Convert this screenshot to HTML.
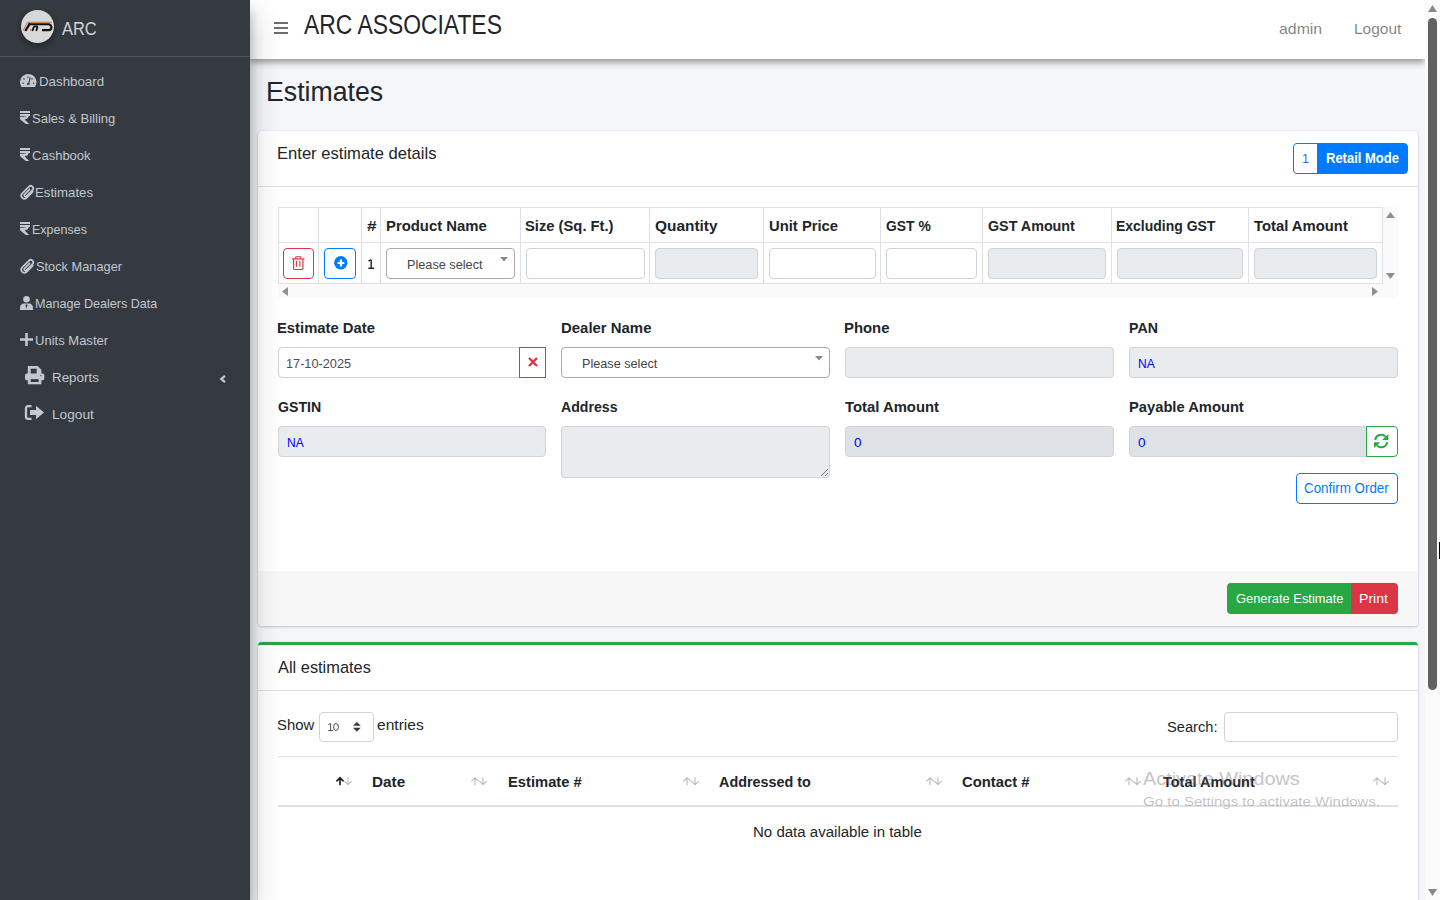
<!DOCTYPE html>
<html><head><meta charset="utf-8"><title>Estimates</title><style>*{box-sizing:border-box;margin:0;padding:0}
html,body{width:1440px;height:900px;overflow:hidden;background:#f4f6f9;font-family:"Liberation Sans",sans-serif;}
.a{position:absolute}
.t{position:absolute;white-space:nowrap}
svg{position:absolute;overflow:visible}
</style></head><body>
<div class="t" style="left:265.51px;top:78.17px;font-size:27.91px;line-height:27.91px;color:#212529;transform:scaleX(0.9564);transform-origin:0 0;">Estimates</div>
<div class="a" style="left:258px;top:131px;width:1160px;height:495px;background:#fff;border-radius:4px;box-shadow:0 0 1px rgba(0,0,0,.125),0 1px 3px rgba(0,0,0,.2)"></div>
<div class="a" style="left:258px;top:186px;width:1160px;height:1px;background:rgba(0,0,0,.125)"></div>
<div class="t" style="left:277.34px;top:144.60px;font-size:17.01px;line-height:17.01px;color:#212529;transform:scaleX(0.9757);transform-origin:0 0;">Enter estimate details</div>
<div class="a" style="left:1293px;top:143px;width:115px;height:31px;border:1px solid #007bff;border-radius:4px;background:#007bff"></div>
<div class="a" style="left:1294px;top:144px;width:23px;height:29px;background:#fff;border-radius:3px 0 0 3px"></div>
<svg style="left:1303.1px;top:154px" width="5.58" height="9" viewBox="0 0 5.58 9"><path d="M2.90 0.55V8.45M0.28 8.45H5.47M2.90 0.55L0.45 1.80" fill="none" stroke="#007bff" stroke-width="1.1"/></svg>
<div class="t" style="left:1325.83px;top:151.69px;font-size:13.95px;line-height:13.95px;color:#fff;font-weight:bold;transform:scaleX(0.9325);transform-origin:0 0;">Retail Mode</div>
<div class="a" style="left:278px;top:207px;width:1120px;height:91px;background:#fafafa"></div>
<div class="a" style="left:278px;top:207px;width:1105px;height:77px;background:#fff"></div>
<div class="a" style="left:278px;top:207px;width:1105px;height:1px;background:#dee2e6"></div>
<div class="a" style="left:278px;top:242px;width:1105px;height:1px;background:#dee2e6"></div>
<div class="a" style="left:278px;top:283px;width:1105px;height:1px;background:#dee2e6"></div>
<div class="a" style="left:278px;top:207px;width:1px;height:77px;background:#dee2e6"></div>
<div class="a" style="left:318px;top:207px;width:1px;height:77px;background:#dee2e6"></div>
<div class="a" style="left:361px;top:207px;width:1px;height:77px;background:#dee2e6"></div>
<div class="a" style="left:380px;top:207px;width:1px;height:77px;background:#dee2e6"></div>
<div class="a" style="left:520px;top:207px;width:1px;height:77px;background:#dee2e6"></div>
<div class="a" style="left:649px;top:207px;width:1px;height:77px;background:#dee2e6"></div>
<div class="a" style="left:763px;top:207px;width:1px;height:77px;background:#dee2e6"></div>
<div class="a" style="left:880px;top:207px;width:1px;height:77px;background:#dee2e6"></div>
<div class="a" style="left:982px;top:207px;width:1px;height:77px;background:#dee2e6"></div>
<div class="a" style="left:1111px;top:207px;width:1px;height:77px;background:#dee2e6"></div>
<div class="a" style="left:1248px;top:207px;width:1px;height:77px;background:#dee2e6"></div>
<div class="a" style="left:1382px;top:207px;width:1px;height:77px;background:#dee2e6"></div>
<div class="t" style="left:366.71px;top:218.10px;font-size:15.12px;line-height:15.12px;color:#212529;font-weight:bold;transform:scaleX(1.1386);transform-origin:0 0;">#</div>
<div class="t" style="left:385.51px;top:218.10px;font-size:15.12px;line-height:15.12px;color:#212529;font-weight:bold;transform:scaleX(0.9839);transform-origin:0 0;">Product Name</div>
<div class="t" style="left:525.17px;top:218.10px;font-size:15.12px;line-height:15.12px;color:#212529;font-weight:bold;transform:scaleX(0.9764);transform-origin:0 0;">Size (Sq. Ft.)</div>
<div class="t" style="left:655.17px;top:218.10px;font-size:15.12px;line-height:15.12px;color:#212529;font-weight:bold;transform:scaleX(1.0199);transform-origin:0 0;">Quantity</div>
<div class="t" style="left:768.61px;top:218.10px;font-size:15.12px;line-height:15.12px;color:#212529;font-weight:bold;transform:scaleX(0.9794);transform-origin:0 0;">Unit Price</div>
<div class="t" style="left:885.93px;top:218.10px;font-size:15.12px;line-height:15.12px;color:#212529;font-weight:bold;transform:scaleX(0.9185);transform-origin:0 0;">GST %</div>
<div class="t" style="left:987.71px;top:218.10px;font-size:15.12px;line-height:15.12px;color:#212529;font-weight:bold;transform:scaleX(0.9464);transform-origin:0 0;">GST Amount</div>
<div class="t" style="left:1116.47px;top:218.10px;font-size:15.12px;line-height:15.12px;color:#212529;font-weight:bold;transform:scaleX(0.9245);transform-origin:0 0;">Excluding GST</div>
<div class="t" style="left:1253.83px;top:218.10px;font-size:15.12px;line-height:15.12px;color:#212529;font-weight:bold;transform:scaleX(0.9806);transform-origin:0 0;">Total Amount</div>
<div class="a" style="left:283px;top:248px;width:31px;height:31px;border:1px solid #dc3545;border-radius:4px"></div>
<div class="a" style="left:324px;top:248px;width:32px;height:31px;border:1px solid #007bff;border-radius:4px"></div>
<svg style="left:367.8px;top:258.8px" width="6.20" height="10" viewBox="0 0 6.20 10"><path d="M3.22 0.70V9.30M0.31 9.30H6.08M3.22 0.70L0.50 2.00" fill="none" stroke="#212529" stroke-width="1.4"/></svg>
<svg style="left:292px;top:256px" width="13" height="14" viewBox="0 0 13 14"><path d="M0 2.95h12.6" stroke="#dc3545" stroke-width="1.3"/><path d="M3.4 2.6L4.1 .75h4.4l.7 1.85" fill="none" stroke="#dc3545" stroke-width="1.2"/><path d="M1.6 3.4V12.4a1.1 1.1 0 0 0 1.1 1.1h7.1a1.1 1.1 0 0 0 1.1-1.1V3.4" fill="none" stroke="#dc3545" stroke-width="1.2"/><path d="M4.6 4.8v6M7.9 4.8v6" stroke="#dc3545" stroke-width="1.1"/></svg>
<svg style="left:333.8px;top:255.9px" width="14" height="14" viewBox="0 0 14 14"><circle cx="6.8" cy="6.8" r="6.7" fill="#007bff"/><path d="M7 3.6v6.8M3.6 7h6.8" stroke="#fff" stroke-width="2.2"/></svg>
<div class="a" style="left:386px;top:248px;width:129px;height:31px;border:1px solid #aaa;border-radius:4px;background:#fff"></div>
<div class="t" style="left:406.56px;top:258.05px;font-size:13.52px;line-height:13.52px;color:#444;transform:scaleX(0.9396);transform-origin:0 0;">Please select</div>
<svg style="left:500px;top:257px" width="8" height="4.5" viewBox="0 0 8 4.5"><path d="M0 0h8L4 4.5z" fill="#888"/></svg>
<div class="a" style="left:526px;top:248px;width:118.5px;height:31px;border:1px solid #ced4da;border-radius:4px;background:#fff"></div>
<div class="a" style="left:655px;top:248px;width:102.5px;height:31px;border:1px solid #ced4da;border-radius:4px;background:#e9ecef"></div>
<div class="a" style="left:769px;top:248px;width:107px;height:31px;border:1px solid #ced4da;border-radius:4px;background:#fff"></div>
<div class="a" style="left:886px;top:248px;width:90.5px;height:31px;border:1px solid #ced4da;border-radius:4px;background:#fff"></div>
<div class="a" style="left:988px;top:248px;width:118px;height:31px;border:1px solid #ced4da;border-radius:4px;background:#e9ecef"></div>
<div class="a" style="left:1117px;top:248px;width:126px;height:31px;border:1px solid #ced4da;border-radius:4px;background:#e9ecef"></div>
<div class="a" style="left:1254px;top:248px;width:123px;height:31px;border:1px solid #ced4da;border-radius:4px;background:#e9ecef"></div>
<svg style="left:1386px;top:212px" width="9" height="6" viewBox="0 0 9 6"><path d="M0 6h9L4.5 0z" fill="#8f8f8f"/></svg>
<svg style="left:1386px;top:273px" width="9" height="6" viewBox="0 0 9 6"><path d="M0 0h9L4.5 6z" fill="#8f8f8f"/></svg>
<svg style="left:282px;top:287px" width="6" height="9" viewBox="0 0 6 9"><path d="M6 0v9L0 4.5z" fill="#8f8f8f"/></svg>
<svg style="left:1372px;top:287px" width="6" height="9" viewBox="0 0 6 9"><path d="M0 0v9L6 4.5z" fill="#8f8f8f"/></svg>
<div class="t" style="left:277.31px;top:320.69px;font-size:14.53px;line-height:14.53px;color:#212529;font-weight:bold;transform:scaleX(1.0198);transform-origin:0 0;">Estimate Date</div>
<div class="t" style="left:560.90px;top:320.69px;font-size:14.53px;line-height:14.53px;color:#212529;font-weight:bold;transform:scaleX(1.0282);transform-origin:0 0;">Dealer Name</div>
<div class="t" style="left:844.00px;top:320.69px;font-size:14.53px;line-height:14.53px;color:#212529;font-weight:bold;transform:scaleX(1.0251);transform-origin:0 0;">Phone</div>
<div class="t" style="left:1128.65px;top:320.69px;font-size:14.53px;line-height:14.53px;color:#212529;font-weight:bold;transform:scaleX(0.9762);transform-origin:0 0;">PAN</div>
<div class="t" style="left:277.72px;top:399.69px;font-size:14.53px;line-height:14.53px;color:#212529;font-weight:bold;transform:scaleX(0.9740);transform-origin:0 0;">GSTIN</div>
<div class="t" style="left:561.15px;top:399.69px;font-size:14.53px;line-height:14.53px;color:#212529;font-weight:bold;transform:scaleX(0.9723);transform-origin:0 0;">Address</div>
<div class="t" style="left:844.83px;top:399.69px;font-size:14.53px;line-height:14.53px;color:#212529;font-weight:bold;transform:scaleX(1.0223);transform-origin:0 0;">Total Amount</div>
<div class="t" style="left:1128.61px;top:399.69px;font-size:14.53px;line-height:14.53px;color:#212529;font-weight:bold;transform:scaleX(1.0140);transform-origin:0 0;">Payable Amount</div>
<div class="a" style="left:278px;top:347px;width:242px;height:31px;border:1px solid #ced4da;border-radius:4px 0 0 4px;background:#fff"></div>
<div class="a" style="left:519px;top:347px;width:27px;height:31px;border:1px solid #dc3545;background:#fff"></div>
<div class="t" style="left:285.93px;top:356.82px;font-size:13.08px;line-height:13.08px;color:#495057;transform:scaleX(0.9721);transform-origin:0 0;">17-10-2025</div>
<svg style="left:527.5px;top:357px" width="10" height="10" viewBox="0 0 10 10"><path d="M1 1l8 8M9 1l-8 8" stroke="#dc3545" stroke-width="2.4"/></svg>
<div class="a" style="left:561px;top:347px;width:269px;height:31px;border:1px solid #aaa;border-radius:4px;background:#fff"></div>
<div class="t" style="left:581.96px;top:357.25px;font-size:13.52px;line-height:13.52px;color:#444;transform:scaleX(0.9371);transform-origin:0 0;">Please select</div>
<svg style="left:815px;top:356px" width="8" height="4.5" viewBox="0 0 8 4.5"><path d="M0 0h8L4 4.5z" fill="#888"/></svg>
<div class="a" style="left:845px;top:347px;width:269px;height:31px;border:1px solid #ced4da;border-radius:4px;background:#e9ecef"></div>
<div class="a" style="left:1129px;top:347px;width:269px;height:31px;border:1px solid #ced4da;border-radius:4px;background:#e9ecef"></div>
<div class="t" style="left:1137.71px;top:356.92px;font-size:13.08px;line-height:13.08px;color:#0000ff;transform:scaleX(0.9204);transform-origin:0 0;">NA</div>
<div class="a" style="left:278px;top:426px;width:268px;height:31px;border:1px solid #ced4da;border-radius:4px;background:#e9ecef"></div>
<div class="t" style="left:286.51px;top:435.92px;font-size:13.08px;line-height:13.08px;color:#0000ff;transform:scaleX(0.9204);transform-origin:0 0;">NA</div>
<div class="a" style="left:561px;top:426px;width:269px;height:52px;border:1px solid #ced4da;border-radius:4px;background:#e9ecef"></div>
<svg style="left:820px;top:468px" width="8" height="8" viewBox="0 0 8 8"><path d="M8 1L1 8M8 5L5 8" stroke="#777" stroke-width="1"/></svg>
<div class="a" style="left:845px;top:426px;width:269px;height:31px;border:1px solid #ced4da;border-radius:4px;background:#dee1e5"></div>
<div class="t" style="left:853.97px;top:435.92px;font-size:13.08px;line-height:13.08px;color:#0000ff;transform:scaleX(1.0385);transform-origin:0 0;">0</div>
<div class="a" style="left:1129px;top:426px;width:238px;height:31px;border:1px solid #ced4da;border-radius:4px 0 0 4px;background:#dee1e5"></div>
<div class="t" style="left:1137.97px;top:435.92px;font-size:13.08px;line-height:13.08px;color:#0000ff;transform:scaleX(1.0385);transform-origin:0 0;">0</div>
<div class="a" style="left:1366px;top:426px;width:32px;height:31px;border:1px solid #28a745;border-radius:0 4px 4px 0;background:#fff"></div>
<svg style="left:1374.2px;top:433.6px" width="15" height="15" viewBox="0 0 15 15"><path d="M1.1 5.9A6.2 6.2 0 0 1 11.6 2.6" fill="none" stroke="#28a745" stroke-width="2"/><path d="M8.1 6H14.4V0.1z" fill="#28a745"/><path d="M13.3 8.1A6.2 6.2 0 0 1 2.8 11.4" fill="none" stroke="#28a745" stroke-width="2"/><path d="M6.3 8.2H0V14z" fill="#28a745"/></svg>
<div class="a" style="left:1296px;top:473px;width:102px;height:31px;border:1px solid #007bff;border-radius:4px;background:#fff"></div>
<div class="t" style="left:1304.32px;top:482.11px;font-size:13.81px;line-height:13.81px;color:#007bff;transform:scaleX(0.9692);transform-origin:0 0;">Confirm Order</div>
<div class="a" style="left:258px;top:571px;width:1160px;height:55px;background:#f7f7f7;border-radius:0 0 4px 4px"></div>
<div class="a" style="left:1227px;top:583px;width:124px;height:31px;background:#28a745;border-radius:4px 0 0 4px"></div>
<div class="a" style="left:1351px;top:583px;width:47px;height:31px;background:#dc3545;border-radius:0 4px 4px 0"></div>
<div class="t" style="left:1235.85px;top:591.80px;font-size:13.23px;line-height:13.23px;color:#fff;transform:scaleX(0.9747);transform-origin:0 0;">Generate Estimate</div>
<div class="t" style="left:1359.34px;top:591.80px;font-size:13.23px;line-height:13.23px;color:#fff;transform:scaleX(1.0652);transform-origin:0 0;">Print</div>
<div class="a" style="left:258px;top:642px;width:1160px;height:300px;background:#fff;border-radius:4px;border-top:3px solid #28a745;box-shadow:0 0 1px rgba(0,0,0,.125),0 1px 3px rgba(0,0,0,.2)"></div>
<div class="a" style="left:258px;top:690px;width:1160px;height:1px;background:rgba(0,0,0,.125)"></div>
<div class="t" style="left:277.67px;top:658.78px;font-size:17.15px;line-height:17.15px;color:#212529;transform:scaleX(0.9560);transform-origin:0 0;">All estimates</div>
<div class="t" style="left:277.12px;top:716.88px;font-size:15.26px;line-height:15.26px;color:#212529;transform:scaleX(0.9760);transform-origin:0 0;">Show</div>
<div class="a" style="left:318.5px;top:711.5px;width:55px;height:30px;border:1px solid #ced4da;border-radius:4px;background:#fff"></div>
<svg style="left:327.8px;top:723px" width="4.96" height="8" viewBox="0 0 4.96 8"><path d="M2.58 0.50V7.50M0.25 7.50H4.86M2.58 0.50L0.40 1.60" fill="none" stroke="#495057" stroke-width="1.0"/></svg>
<svg style="left:333px;top:723px" width="6" height="8" viewBox="0 0 6 8"><ellipse cx="3" cy="4" rx="2.4" ry="3.5" fill="none" stroke="#495057" stroke-width="1"/></svg>
<svg style="left:353px;top:722.2px" width="7.8" height="9.7" viewBox="0 0 7.8 9.7"><path d="M0 3.8h7.8L3.9 0zM0 5.8h7.8L3.9 9.7z" fill="#343a40"/></svg>
<div class="t" style="left:377.14px;top:716.88px;font-size:15.26px;line-height:15.26px;color:#212529;transform:scaleX(1.0206);transform-origin:0 0;">entries</div>
<div class="t" style="left:1166.53px;top:718.98px;font-size:15.26px;line-height:15.26px;color:#212529;transform:scaleX(0.9628);transform-origin:0 0;">Search:</div>
<div class="a" style="left:1224px;top:711.5px;width:174px;height:30px;border:1px solid #ced4da;border-radius:4px;background:#fff"></div>
<div class="a" style="left:278px;top:756px;width:1120px;height:1px;background:#dee2e6"></div>
<div class="a" style="left:278px;top:805px;width:1120px;height:2px;background:#dee2e6"></div>
<div class="t" style="left:371.78px;top:774.65px;font-size:14.83px;line-height:14.83px;color:#212529;font-weight:bold;transform:scaleX(1.0323);transform-origin:0 0;">Date</div>
<div class="t" style="left:508.01px;top:774.65px;font-size:14.83px;line-height:14.83px;color:#212529;font-weight:bold;transform:scaleX(0.9939);transform-origin:0 0;">Estimate #</div>
<div class="t" style="left:719.24px;top:774.65px;font-size:14.83px;line-height:14.83px;color:#212529;font-weight:bold;transform:scaleX(0.9691);transform-origin:0 0;">Addressed to</div>
<div class="t" style="left:962.39px;top:774.65px;font-size:14.83px;line-height:14.83px;color:#212529;font-weight:bold;transform:scaleX(0.9994);transform-origin:0 0;">Contact #</div>
<div class="t" style="left:1163.24px;top:774.65px;font-size:14.83px;line-height:14.83px;color:#212529;font-weight:bold;transform:scaleX(0.9770);transform-origin:0 0;">Total Amount</div>
<svg style="left:335.5px;top:776.9px" width="16.5" height="8.5" viewBox="0 0 16.5 8.5"><path d="M4 8.3V0.8M0.4 4.4L4 0.8l3.6 3.6" fill="none" stroke="#212529" stroke-width="1.7"/><path d="M12 0.2V7.7M8.4 4.1L12 7.7l3.6-3.6" fill="none" stroke="#b9bdc1" stroke-width="1.15"/></svg>
<svg style="left:470.8px;top:776.9px" width="16.5" height="8.5" viewBox="0 0 16.5 8.5"><path d="M4 8.3V0.8M0.4 4.4L4 0.8l3.6 3.6" fill="none" stroke="#b9bdc1" stroke-width="1.15"/><path d="M12 0.2V7.7M8.4 4.1L12 7.7l3.6-3.6" fill="none" stroke="#b9bdc1" stroke-width="1.15"/></svg>
<svg style="left:682.5px;top:776.9px" width="16.5" height="8.5" viewBox="0 0 16.5 8.5"><path d="M4 8.3V0.8M0.4 4.4L4 0.8l3.6 3.6" fill="none" stroke="#b9bdc1" stroke-width="1.15"/><path d="M12 0.2V7.7M8.4 4.1L12 7.7l3.6-3.6" fill="none" stroke="#b9bdc1" stroke-width="1.15"/></svg>
<svg style="left:925.8px;top:776.9px" width="16.5" height="8.5" viewBox="0 0 16.5 8.5"><path d="M4 8.3V0.8M0.4 4.4L4 0.8l3.6 3.6" fill="none" stroke="#b9bdc1" stroke-width="1.15"/><path d="M12 0.2V7.7M8.4 4.1L12 7.7l3.6-3.6" fill="none" stroke="#b9bdc1" stroke-width="1.15"/></svg>
<svg style="left:1124.6px;top:776.9px" width="16.5" height="8.5" viewBox="0 0 16.5 8.5"><path d="M4 8.3V0.8M0.4 4.4L4 0.8l3.6 3.6" fill="none" stroke="#b9bdc1" stroke-width="1.15"/><path d="M12 0.2V7.7M8.4 4.1L12 7.7l3.6-3.6" fill="none" stroke="#b9bdc1" stroke-width="1.15"/></svg>
<svg style="left:1372.8px;top:776.9px" width="16.5" height="8.5" viewBox="0 0 16.5 8.5"><path d="M4 8.3V0.8M0.4 4.4L4 0.8l3.6 3.6" fill="none" stroke="#b9bdc1" stroke-width="1.15"/><path d="M12 0.2V7.7M8.4 4.1L12 7.7l3.6-3.6" fill="none" stroke="#b9bdc1" stroke-width="1.15"/></svg>
<div class="t" style="left:752.97px;top:825.09px;font-size:14.53px;line-height:14.53px;color:#212529;transform:scaleX(1.0353);transform-origin:0 0;">No data available in table</div>
<div class="t" style="left:1143.46px;top:769.13px;font-size:19.04px;line-height:19.04px;color:rgba(120,120,120,.45);transform:scaleX(1.0440);transform-origin:0 0;">Activate Windows</div>
<div class="t" style="left:1142.74px;top:794.68px;font-size:13.66px;line-height:13.66px;color:rgba(120,120,120,.45);transform:scaleX(1.1000);transform-origin:0 0;">Go to Settings to activate Windows.</div>
<div class="a" style="left:250px;top:0;width:1175px;height:59px;background:#fff;box-shadow:0 3px 7px rgba(0,0,0,.42)"></div>
<div class="a" style="left:274px;top:22px;width:14px;height:2px;background:#6e6e6e"></div>
<div class="a" style="left:274px;top:27px;width:14px;height:2px;background:#6e6e6e"></div>
<div class="a" style="left:274px;top:32px;width:14px;height:2px;background:#6e6e6e"></div>
<div class="t" style="left:304.16px;top:10.99px;font-size:27.18px;line-height:27.18px;color:#212529;transform:scaleX(0.8419);transform-origin:0 0;">ARC ASSOCIATES</div>
<div class="t" style="left:1279.13px;top:22.02px;font-size:14.97px;line-height:14.97px;color:rgba(0,0,0,.5);transform:scaleX(1.0594);transform-origin:0 0;">admin</div>
<div class="t" style="left:1353.73px;top:22.02px;font-size:14.97px;line-height:14.97px;color:rgba(0,0,0,.5);transform:scaleX(1.0324);transform-origin:0 0;">Logout</div>
<div class="a" style="left:0;top:0;width:250px;height:900px;background:#343a40;box-shadow:0 14px 28px rgba(0,0,0,.25),0 10px 10px rgba(0,0,0,.22)"></div>
<div class="a" style="left:0px;top:56px;width:250px;height:1px;background:#4b545c"></div>
<div class="a" style="left:21px;top:10px;width:33px;height:33px;border-radius:50%;background:#d8d8d8;box-shadow:0 3px 6px rgba(0,0,0,.16),0 3px 6px rgba(0,0,0,.23)"></div>
<svg style="left:18px;top:8px" width="40" height="38" viewBox="18 8 40 38"><path d="M23.1 30.6L27.5 22.3H51.6" fill="none" stroke="#c8643c" stroke-width="0.9"/><path d="M25.3 31L29.9 23.3" stroke="#111" stroke-width="2.3"/><path d="M28.6 24.3H48.5A2.9 2.9 0 0 1 48.5 30.1H42" fill="none" stroke="#111" stroke-width="2.1"/><path d="M32.3 31L33.7 27.2Q34 26.4 35 26.4H36.6Q37.6 26.4 37.3 27.4L36.2 31" fill="none" stroke="#111" stroke-width="1.8"/><circle cx="30.6" cy="29.9" r="0.8" fill="#c8643c"/></svg>
<div class="t" style="left:61.97px;top:18.76px;font-size:19.19px;line-height:19.19px;color:rgba(255,255,255,.8);transform:scaleX(0.8564);transform-origin:0 0;">ARC</div>
<div class="t" style="left:38.71px;top:74.98px;font-size:13.37px;line-height:13.37px;color:#c2c7d0;transform:scaleX(0.9961);transform-origin:0 0;">Dashboard</div>
<div class="t" style="left:32.11px;top:111.68px;font-size:13.37px;line-height:13.37px;color:#c2c7d0;transform:scaleX(0.9754);transform-origin:0 0;">Sales &amp; Billing</div>
<div class="t" style="left:31.94px;top:148.88px;font-size:13.37px;line-height:13.37px;color:#c2c7d0;transform:scaleX(0.9741);transform-origin:0 0;">Cashbook</div>
<div class="t" style="left:35.21px;top:185.88px;font-size:13.37px;line-height:13.37px;color:#c2c7d0;transform:scaleX(0.9894);transform-origin:0 0;">Estimates</div>
<div class="t" style="left:31.77px;top:223.08px;font-size:13.37px;line-height:13.37px;color:#c2c7d0;transform:scaleX(0.9363);transform-origin:0 0;">Expenses</div>
<div class="t" style="left:35.52px;top:260.18px;font-size:13.37px;line-height:13.37px;color:#c2c7d0;transform:scaleX(0.9574);transform-origin:0 0;">Stock Manager</div>
<div class="t" style="left:35.07px;top:296.98px;font-size:13.37px;line-height:13.37px;color:#c2c7d0;transform:scaleX(0.9415);transform-origin:0 0;">Manage Dealers Data</div>
<div class="t" style="left:35.39px;top:333.68px;font-size:13.37px;line-height:13.37px;color:#c2c7d0;transform:scaleX(0.9746);transform-origin:0 0;">Units Master</div>
<div class="t" style="left:52.20px;top:371.18px;font-size:13.37px;line-height:13.37px;color:#c2c7d0;transform:scaleX(1.0015);transform-origin:0 0;">Reports</div>
<div class="t" style="left:52.18px;top:408.08px;font-size:13.37px;line-height:13.37px;color:#c2c7d0;transform:scaleX(1.0224);transform-origin:0 0;">Logout</div>
<svg style="left:20.4px;top:74px" width="16.5" height="13" viewBox="0 0 16.5 13"><path d="M1.5 13A8.25 8.25 0 1 1 15 13Z" fill="#c2c7d0"/><path d="M8.6 10.3L10.2 3.4" stroke="#343a40" stroke-width="1.1"/><path d="M6.9 9.3h2.6v1.5H6.9z" fill="#343a40"/><circle cx="3.1" cy="9.3" r=".75" fill="#343a40"/><circle cx="4" cy="5" r=".75" fill="#343a40"/><circle cx="8" cy="3.3" r=".75" fill="#343a40"/><circle cx="12" cy="5" r=".75" fill="#343a40"/><circle cx="13.6" cy="9.3" r=".75" fill="#343a40"/></svg>
<svg style="left:20px;top:111px" width="10" height="13" viewBox="0 0 10 13"><path d="M0 0h10v2.1H0zM0 3.1h10v2H0zM0 5.75H3.4C4.9 5.75 5.8 5.5 6.3 5.1H8.7C8.3 7.3 6.7 8.3 4.6 8.5L9.3 13H5.8L0 8.3z" fill="#c2c7d0"/></svg>
<svg style="left:20px;top:148.2px" width="10" height="13" viewBox="0 0 10 13"><path d="M0 0h10v2.1H0zM0 3.1h10v2H0zM0 5.75H3.4C4.9 5.75 5.8 5.5 6.3 5.1H8.7C8.3 7.3 6.7 8.3 4.6 8.5L9.3 13H5.8L0 8.3z" fill="#c2c7d0"/></svg>
<svg style="left:20px;top:222.4px" width="10" height="13" viewBox="0 0 10 13"><path d="M0 0h10v2.1H0zM0 3.1h10v2H0zM0 5.75H3.4C4.9 5.75 5.8 5.5 6.3 5.1H8.7C8.3 7.3 6.7 8.3 4.6 8.5L9.3 13H5.8L0 8.3z" fill="#c2c7d0"/></svg>
<svg style="left:20.9px;top:184.6px" width="13" height="15" viewBox="0 0 13 15"><path d="M11.8 6.6L5.6 12.8A3.1 3.1 0 0 1 1.2 8.4L8 1.6A2.47 2.47 0 0 1 11.5 5.1L5.4 11.2A1.27 1.27 0 0 1 3.6 9.4L8.6 4.4" fill="none" stroke="#c2c7d0" stroke-width="1.7" stroke-linecap="round"/></svg>
<svg style="left:20.9px;top:259.1px" width="13" height="15" viewBox="0 0 13 15"><path d="M11.8 6.6L5.6 12.8A3.1 3.1 0 0 1 1.2 8.4L8 1.6A2.47 2.47 0 0 1 11.5 5.1L5.4 11.2A1.27 1.27 0 0 1 3.6 9.4L8.6 4.4" fill="none" stroke="#c2c7d0" stroke-width="1.7" stroke-linecap="round"/></svg>
<svg style="left:20.3px;top:296px" width="13" height="14" viewBox="0 0 13 14"><circle cx="6.5" cy="3.3" r="3.3" fill="#c2c7d0"/><path d="M0 14v-2.3C0 9.5 1.8 7.6 4 7.6h5c2.2 0 4 1.9 4 4.1V14z" fill="#c2c7d0"/><path d="M6.5 8l-1 1.3 1 3.5 1-3.5z" fill="#343a40"/></svg>
<svg style="left:20.3px;top:333px" width="13" height="13" viewBox="0 0 13 13"><path d="M6.5 0v13M0 6.5h13" stroke="#c2c7d0" stroke-width="2.6"/></svg>
<svg style="left:24.8px;top:366px" width="19.3" height="18.3" viewBox="0 0 19.3 18.3"><path d="M2.8 0h9.8l3.8 3.8v4.4H2.8z" fill="#c2c7d0"/><path d="M5.7 2.7h6v5.3h-6z" fill="#343a40"/><rect x="0" y="7.6" width="19.3" height="6.6" rx="1.6" fill="#c2c7d0"/><path d="M2.8 11.4h13.6v6.9H2.8z" fill="#c2c7d0"/><path d="M5.7 13.1h7.9v2.9H5.7z" fill="#343a40"/><circle cx="15.8" cy="9.6" r=".7" fill="#343a40"/></svg>
<svg style="left:25px;top:405px" width="19" height="15" viewBox="0 0 19 15"><path d="M6.5 1.2H3A2 2 0 0 0 1 3.2v8.6a2 2 0 0 0 2 2h3.5" fill="none" stroke="#c2c7d0" stroke-width="2.3"/><path d="M11 0.8l8 6.7-8 6.7V10H5V5h6z" fill="#c2c7d0"/></svg>
<svg style="left:219.4px;top:374.8px" width="7" height="8" viewBox="0 0 7 8"><path d="M6 .9L2.2 4 6 7.1" fill="none" stroke="#c2c7d0" stroke-width="2.2"/></svg>
<div class="a" style="left:1425px;top:0px;width:15px;height:900px;background:#fbfbfb"></div>
<svg style="left:1428px;top:5px" width="9" height="7" viewBox="0 0 9 7"><path d="M0 7h9L4.5 0z" fill="#8a8a8a"/></svg>
<div class="a" style="left:1428px;top:18px;width:9px;height:672px;background:#616161;border-radius:5px"></div>
<svg style="left:1428px;top:889px" width="9" height="7" viewBox="0 0 9 7"><path d="M0 0h9L4.5 7z" fill="#8a8a8a"/></svg>
<div class="a" style="left:1439px;top:542px;width:1px;height:17px;background:#000"></div>
</body></html>
